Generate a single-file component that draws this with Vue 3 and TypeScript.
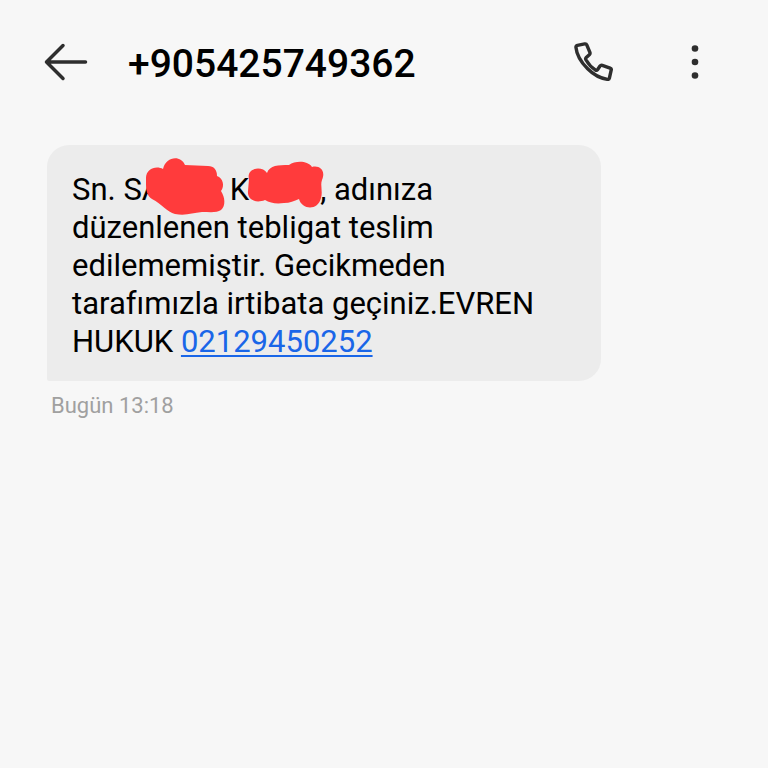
<script setup lang="ts">
const sender = '+905425749362'
const linkedNumber = '02129450252'
const sentAt = 'Bugün 13:18'
</script>

<template>
  <main class="screen">
    <header class="bar">
      <button class="icon-button" type="button" aria-label="Geri">
        <svg class="back" viewBox="0 0 44 38" width="44" height="38" aria-hidden="true">
          <path d="M19 2.500L2.500 19L19 35.500M2.500 19H41.500" />
        </svg>
      </button>
      <h1 class="sender">{{ sender }}</h1>
      <button class="icon-button" type="button" aria-label="Ara">
        <svg class="phone" viewBox="0 0 40 40" width="39" height="39" aria-hidden="true">
          <path d="M3.500 3.500L11 2Q12.600 1.700 13.200 3.200L16.300 10.700Q16.800 12 15.700 13L12.300 16.200Q11.600 17 12.200 18.200Q16.200 25 21.800 28.600Q23.300 29.400 24.100 28.400L26.700 24.600Q27.600 23.400 29 23.900L37 26.700Q38.500 27.200 38.200 28.700L36.300 37Q35.900 38.500 34.300 38.300Q23.500 37 14 27.500Q3 16.500 2 5.500Q1.900 3.900 3.500 3.500Z" />
        </svg>
      </button>
      <button class="icon-button" type="button" aria-label="Diğer seçenekler">
        <svg class="more" viewBox="0 0 8 36" width="8" height="36" aria-hidden="true">
          <circle cx="4" cy="4.500" r="3.300" />
          <circle cx="4" cy="18" r="3.300" />
          <circle cx="4" cy="31.500" r="3.300" />
        </svg>
      </button>
    </header>

    <section class="thread">
      <p class="bubble">
        Sn. SA<span class="redacted first"><svg viewBox="140 150 90 70" width="90" height="70" aria-hidden="true"><path d="M146 178C146 169 156 165 163 169C166 156 181 155 185 165L208 166C214 166 217 170 217 176C223 178 225 186 221 191C225 197 226 206 221 210C217 213 210 212 202 212C192 213 186 216 175 214C167 212 162 204 152 199C147 196 146 190 146 184Z" /></svg></span>
        K<span class="redacted second"><svg viewBox="240 155 90 60" width="90" height="60" aria-hidden="true"><path d="M248 179C245 168 261 165 266 173C269 165 277 165 288 165C294 161 306 160 311 167C319 165 325 171 321 180C319 185 322 191 320 198C317 211 301 210 298 199C293 201 289 203 283 203C275 204 269 203 264 200C254 204 246 199 247 191Z" /></svg></span>, adınıza düzenlenen tebligat teslim edilememiştir. Gecikmeden tarafımızla irtibata geçiniz.EVREN HUKUK <a class="number" :href="`tel:${linkedNumber}`">{{ linkedNumber }}</a>
      </p>
      <time class="stamp" datetime="13:18">{{ sentAt }}</time>
    </section>
  </main>
</template>

<style>
body {
  margin: 0;
  background: #f7f7f7;
}
</style>

<style scoped>
.screen {
  min-height: 100vh;
  box-sizing: border-box;
  background: #f7f7f7;
  color: #000;
  font-family: Roboto, "Noto Sans", sans-serif;
}

.bar {
  display: flex;
  align-items: center;
  height: 123px;
  padding: 0 69px 0 44px;
  gap: 40px;
}

.icon-button {
  display: flex;
  flex: none;
  padding: 0;
  border: 0;
  background: none;
  cursor: pointer;
}

.icon-button + .icon-button {
  margin-left: 38px;
}

.back,
.phone {
  fill: none;
  stroke: #2e2e2e;
  stroke-width: 3.5;
  stroke-linecap: round;
  stroke-linejoin: round;
}

.more {
  fill: #2e2e2e;
}

.sender {
  flex: 1;
  margin: 0;
  padding-top: 4px;
  font-size: 39px;
  font-weight: 500;
  line-height: 48px;
}

.thread {
  display: flex;
  flex-direction: column;
  align-items: flex-start;
  gap: 12px;
  padding: 22px 47px;
}

.bubble {
  box-sizing: border-box;
  max-width: 554px;
  margin: 0;
  padding: 26px 25px 20px;
  border-radius: 22px 22px 22px 2px;
  background: #ececec;
  font-size: 31px;
  line-height: 38px;
}

.redacted {
  display: inline-block;
  position: relative;
  height: 24px;
}

.redacted svg {
  position: absolute;
  fill: #ff3b3c;
}

.first {
  width: 60px;
}

.first svg {
  left: -22px;
  top: -26px;
}

.second {
  width: 71px;
}

.second svg {
  left: -8px;
  top: -21px;
}

.number {
  color: #1a66e8;
  text-decoration: underline;
  text-decoration-thickness: 2px;
  text-underline-offset: 3px;
}

.stamp {
  padding-left: 4px;
  color: #a0a0a0;
  font-size: 22px;
  line-height: 26px;
}
</style>
